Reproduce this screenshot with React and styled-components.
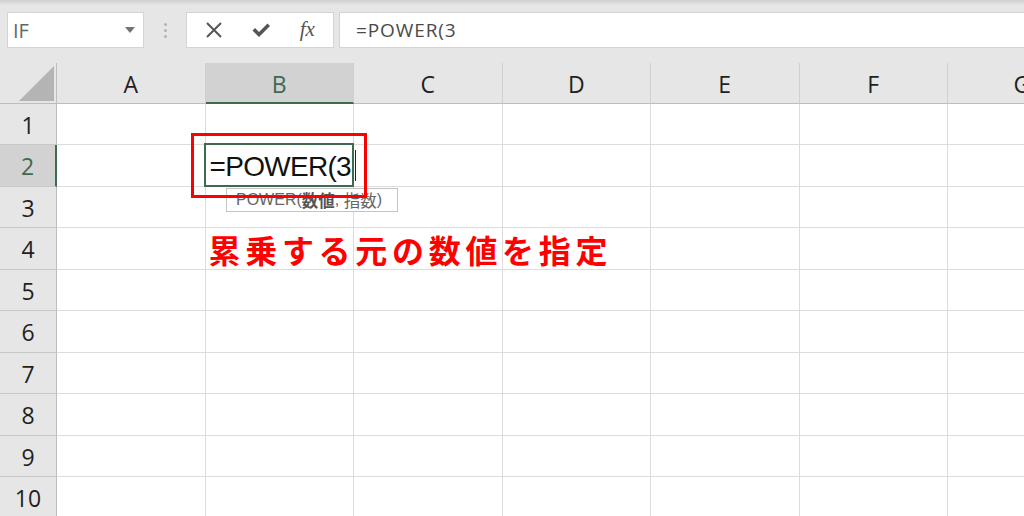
import React from 'react';
import styled, { createGlobalStyle } from 'styled-components';

const GlobalStyle = createGlobalStyle`
  html, body { margin: 0; padding: 0; background: #ffffff; }
  body { font-family: "Open Sans", "Noto Sans", sans-serif; }
`;

const COLUMNS = ['A', 'B', 'C', 'D', 'E', 'F', 'G'];
const ROWS = [1, 2, 3, 4, 5, 6, 7, 8, 9, 10];
const GREEN = '#3e6b4f';

const Page = styled.div`
  width: 1024px;
  height: 516px;
  overflow: hidden;
  display: flex;
  flex-direction: column;
  background: #e6e6e6;
`;

const Toolbar = styled.div`
  height: 63px;
  flex-shrink: 0;
  box-sizing: border-box;
  padding: 12px 0 0 7px;
  display: flex;
  align-items: flex-start;
  background: linear-gradient(#cfcfcf 0px, #e6e6e6 5px);
`;

const Field = styled.div`
  height: 36px;
  box-sizing: border-box;
  background: #fff;
  border: 1px solid #d4d4d4;
  display: flex;
  align-items: center;
`;

const NameBox = styled(Field)`
  width: 137px;
  padding: 0 6px 0 5px;
  justify-content: space-between;
  font-family: "Open Sans", sans-serif;
  font-size: 20px;
  color: #5b6b60;
`;

const Caret = styled.span`
  width: 0;
  height: 0;
  border-left: 5px solid transparent;
  border-right: 5px solid transparent;
  border-top: 6px solid #7a716a;
  margin-right: 2px;
`;

const Grip = styled.div`
  width: 42px;
  height: 36px;
  display: flex;
  flex-direction: column;
  align-items: center;
  justify-content: center;
  gap: 3px;
  & > i {
    width: 3px;
    height: 3px;
    border-radius: 50%;
    background: #b3b3b3;
  }
`;

const Buttons = styled(Field)`
  width: 148px;
  justify-content: space-around;
  padding: 0 4px;
  color: #555;
`;

const Fx = styled.span`
  font-family: "Liberation Serif", serif;
  font-style: italic;
  font-size: 21px;
  color: #555;
  margin-top: -2px;
`;

const Formula = styled(Field)`
  flex: 1;
  margin-left: 5px;
  padding-left: 16px;
  font-family: "Open Sans", sans-serif;
  font-size: 19px;
  letter-spacing: 0.9px;
  color: #4a4a4a;
  border-right: none;
`;

const Sheet = styled.div`
  position: relative;
  flex: 1;
  display: grid;
  grid-template-columns: 57px repeat(7, 148.5px);
  grid-template-rows: 40.5px repeat(10, 41.5px);
  background: #ffffff;
  overflow: hidden;
`;

const Corner = styled.div`
  background: #e6e6e6;
  border-right: 1px solid #bdbdbd;
  border-bottom: 1px solid #bdbdbd;
  box-sizing: border-box;
  position: relative;
  &::after {
    content: '';
    position: absolute;
    right: 2px;
    bottom: 2px;
    width: 0;
    height: 0;
    border-left: 35px solid transparent;
    border-bottom: 35px solid #b4b4b4;
  }
`;

const ColHead = styled.div`
  box-sizing: border-box;
  background: ${p => (p.$active ? '#d2d2d2' : '#e6e6e6')};
  border-right: 1px solid #d0d0d0;
  border-bottom: ${p => (p.$active ? `2px solid ${GREEN}` : '1px solid #bdbdbd')};
  display: flex;
  align-items: center;
  justify-content: center;
  padding-top: 3px;
  font-size: 23px;
  color: ${p => (p.$active ? GREEN : '#1f1f1f')};
`;

const RowHead = styled.div`
  box-sizing: border-box;
  background: ${p => (p.$active ? '#d2d2d2' : '#e6e6e6')};
  border-right: ${p => (p.$active ? `2px solid ${GREEN}` : '1px solid #bdbdbd')};
  border-bottom: 1px solid #c8c8c8;
  display: flex;
  align-items: center;
  justify-content: center;
  padding-top: 2px;
  font-size: 23px;
  color: ${p => (p.$active ? GREEN : '#1f1f1f')};
`;

const Cell = styled.div`
  box-sizing: border-box;
  border-right: 1px solid #dcdcdc;
  border-bottom: 1px solid #dcdcdc;
  position: relative;
  display: flex;
  align-items: center;
  white-space: nowrap;
  overflow: visible;
`;

const ActiveBox = styled.div`
  position: absolute;
  left: -2px;
  top: -2px;
  right: -1px;
  bottom: -1px;
  border: 2px solid ${GREEN};
  z-index: 2;
  pointer-events: none;
`;

const Entry = styled.span`
  position: relative;
  z-index: 3;
  padding-left: 4px;
  padding-top: 2px;
  font-family: "Liberation Sans", Arial, sans-serif;
  font-size: 28px;
  letter-spacing: -0.7px;
  color: #111;
  &::after {
    content: '';
    display: inline-block;
    width: 1px;
    height: 31px;
    margin-left: 4px;
    vertical-align: -5px;
    background: #222;
  }
`;

const Note = styled.span`
  position: relative;
  z-index: 3;
  padding-left: 3px;
  margin-top: 2px;
  font-family: "Noto Sans CJK JP", sans-serif;
  font-weight: 700;
  font-size: 32px;
  letter-spacing: 4.7px;
  color: #ff0000;
`;

const Tip = styled.div`
  position: absolute;
  left: 226px;
  top: 125px;
  width: 172px;
  height: 24px;
  box-sizing: border-box;
  background: #fff;
  border: 1px solid #c4c4c4;
  padding-left: 9px;
  display: flex;
  align-items: center;
  font-family: "Liberation Sans", Arial, sans-serif;
  font-size: 16px;
  color: #666;
  z-index: 4;
  white-space: pre;
`;

const TipArg = styled.span`
  font-family: "Noto Sans CJK JP", sans-serif;
  font-size: 16.5px;
  font-weight: ${p => (p.$bold ? 700 : 400)};
  color: ${p => (p.$bold ? '#555' : '#666')};
`;

const Highlight = styled.div`
  position: absolute;
  left: 191px;
  top: 70px;
  width: 176px;
  height: 65px;
  box-sizing: border-box;
  border: 3.5px solid #ff0000;
  z-index: 5;
  pointer-events: none;
`;

function CrossIcon() {
  return (
    <svg width="18" height="18" viewBox="0 0 18 18">
      <path d="M2 2 L16 16 M16 2 L2 16" stroke="#555" strokeWidth="2" fill="none" />
    </svg>
  );
}

function CheckIcon() {
  return (
    <svg width="20" height="18" viewBox="0 0 20 18">
      <path d="M1.5 9.5 L4 7 L8 11 L16.5 2.5 L19 5 L8 16 Z" fill="#555" />
    </svg>
  );
}

function cellContent(row, col) {
  if (row === 2 && col === 'B') return <Entry>=POWER(3</Entry>;
  if (row === 4 && col === 'B') return <Note>累乗する元の数値を指定</Note>;
  return null;
}

export default function App() {
  return (
    <Page>
      <GlobalStyle />
      <Toolbar>
        <NameBox>
          <span>IF</span>
          <Caret />
        </NameBox>
        <Grip><i /><i /><i /></Grip>
        <Buttons>
          <CrossIcon />
          <CheckIcon />
          <Fx>fx</Fx>
        </Buttons>
        <Formula>=POWER(3</Formula>
      </Toolbar>
      <Sheet>
        <Corner />
        {COLUMNS.map(c => (
          <ColHead key={c} $active={c === 'B'}>{c}</ColHead>
        ))}
        {ROWS.map(r => (
          <React.Fragment key={r}>
            <RowHead $active={r === 2}>{r}</RowHead>
            {COLUMNS.map(c => (
              <Cell key={c}>
                {r === 2 && c === 'B' && <ActiveBox />}
                {cellContent(r, c)}
              </Cell>
            ))}
          </React.Fragment>
        ))}
        <Tip>
          {'POWER('}
          <TipArg $bold>数値</TipArg>
          {', '}
          <TipArg>指数</TipArg>
          {')'}
        </Tip>
        <Highlight />
      </Sheet>
    </Page>
  );
}
